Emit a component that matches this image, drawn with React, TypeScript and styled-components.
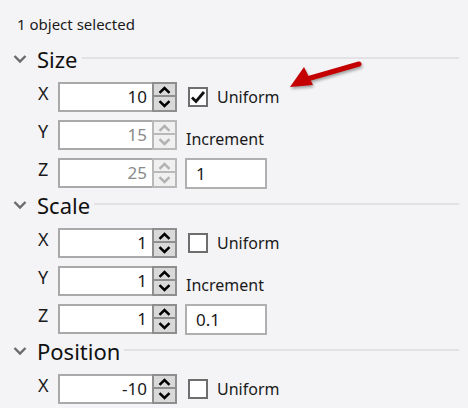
import React from 'react';
import styled, { createGlobalStyle } from 'styled-components';

const GlobalStyle = createGlobalStyle`
  html, body {
    margin: 0;
    padding: 0;
    background: #f4f4f6;
    font-family: "Noto Sans", "Open Sans", sans-serif;
    color: #1a1a1a;
  }
  * { box-sizing: border-box; }
`;

const Panel = styled.div`
  position: relative;
  width: 468px;
  padding-top: 14px;
`;

const Status = styled.div`
  padding-left: 17px;
  font-size: 15px;
  line-height: 20px;
  height: 30px;
`;

const Section = styled.section`
  padding-bottom: 2px;
`;

const Header = styled.div`
  display: flex;
  align-items: center;
  height: 30px;
  padding-left: 13px;
`;

const Title = styled.span`
  margin-left: 10px;
  font-size: 22px;
  line-height: 30px;
  color: #111;
`;

const Rule = styled.div`
  flex: 1;
  height: 2px;
  margin: 0 9px 2px 4px;
  background: #e2e2e6;
`;

const Rows = styled.div`
  display: grid;
  grid-template-columns: 12px 119px auto;
  grid-auto-rows: 30px;
  column-gap: 8px;
  row-gap: 8px;
  padding: 8px 0 0 38px;
`;

const Axis = styled.span`
  font-size: 18px;
  line-height: 22px;
  align-self: start;
`;

const Field = styled.div`
  display: flex;
  height: 30px;
`;

const ValueBox = styled.div<{ $disabled?: boolean }>`
  flex: 1;
  background: #fff;
  border: 2px solid #a9a9a9;
  border-right: none;
  padding-right: 5px;
  text-align: right;
  font-size: 17px;
  line-height: 26px;
  color: ${p => (p.$disabled ? '#8a8a8a' : '#1a1a1a')};
`;

const Spinner = styled.div<{ $disabled?: boolean }>`
  width: 25px;
  display: grid;
  grid-template-rows: 1fr 1fr;
  border: 2px solid ${p => (p.$disabled ? '#b9b9b9' : '#8e8e8e')};
  background: ${p => (p.$disabled ? '#f0f0f0' : '#d9d9d9')};
  color: ${p => (p.$disabled ? '#b2b2b2' : '#000')};
`;

const SpinButton = styled.div<{ $top?: boolean; $disabled?: boolean }>`
  display: flex;
  align-items: center;
  justify-content: center;
  border-bottom: ${p => (p.$top ? `2px solid ${p.$disabled ? '#b9b9b9' : '#8e8e8e'}` : 'none')};
`;

const Side = styled.div<{ $end?: boolean }>`
  display: flex;
  align-items: ${p => (p.$end ? 'flex-end' : 'center')};
`;

const CheckBox = styled.span`
  width: 20px;
  height: 20px;
  margin-left: 3px;
  border: 2px solid #6e6e6e;
  background: #fff;
  display: flex;
  align-items: center;
  justify-content: center;
`;

const CheckLabel = styled.span`
  margin-left: 9px;
  font-size: 16px;
`;

const IncLabel = styled.span`
  margin-left: 1px;
  font-size: 16px;
  line-height: 20px;
  margin-bottom: 1px;
`;

const IncBox = styled.div`
  width: 82px;
  height: 31px;
  background: #fff;
  border: 2px solid #b0b0b0;
  padding-left: 9px;
  font-size: 17px;
  line-height: 27px;
`;

const Pointer = styled.svg`
  position: absolute;
  left: 285px;
  top: 56px;
  filter: drop-shadow(1px 2px 1.5px rgba(0, 0, 0, 0.35));
`;

const Chevron = ({ up }: { up?: boolean }) => (
  <svg width="13" height="8" viewBox="0 0 13 8">
    <path
      d={up ? 'M1.5 6.8 L6.5 2 L11.5 6.8' : 'M1.5 1.2 L6.5 6 L11.5 1.2'}
      fill="none"
      stroke="currentColor"
      strokeWidth="2.5"
    />
  </svg>
);

const Caret = () => (
  <svg width="14" height="10" viewBox="0 0 14 10">
    <path d="M1.5 2 L7 7.5 L12.5 2" fill="none" stroke="#6a6a6a" strokeWidth="2.4" />
  </svg>
);

type Row = {
  axis: string;
  value: string;
  disabled?: boolean;
  side?: 'check' | 'checked' | 'label' | 'box';
  inc?: string;
};

function NumberField({ value, disabled }: { value: string; disabled?: boolean }) {
  return (
    <Field>
      <ValueBox $disabled={disabled}>{value}</ValueBox>
      <Spinner $disabled={disabled}>
        <SpinButton $top $disabled={disabled}>
          <Chevron up />
        </SpinButton>
        <SpinButton>
          <Chevron />
        </SpinButton>
      </Spinner>
    </Field>
  );
}

function SideCell({ row }: { row: Row }) {
  if (row.side === 'check' || row.side === 'checked') {
    return (
      <Side>
        <CheckBox>
          {row.side === 'checked' && (
            <svg width="16" height="14" viewBox="0 0 16 14">
              <path d="M2 7.5 L6 11.5 L14 2" fill="none" stroke="#111" strokeWidth="2.8" />
            </svg>
          )}
        </CheckBox>
        <CheckLabel>Uniform</CheckLabel>
      </Side>
    );
  }
  if (row.side === 'label') {
    return (
      <Side $end>
        <IncLabel>Increment</IncLabel>
      </Side>
    );
  }
  if (row.side === 'box') {
    return (
      <Side>
        <IncBox>{row.inc}</IncBox>
      </Side>
    );
  }
  return <Side />;
}

function Group({ title, rows }: { title: string; rows: Row[] }) {
  return (
    <Section>
      <Header>
        <Caret />
        <Title>{title}</Title>
        <Rule />
      </Header>
      <Rows>
        {rows.map(r => (
          <React.Fragment key={r.axis}>
            <Axis>{r.axis}</Axis>
            <NumberField value={r.value} disabled={r.disabled} />
            <SideCell row={r} />
          </React.Fragment>
        ))}
      </Rows>
    </Section>
  );
}

export default function App() {
  return (
    <>
      <GlobalStyle />
      <Panel>
        <Status>1 object selected</Status>
        <Group
          title="Size"
          rows={[
            { axis: 'X', value: '10', side: 'checked' },
            { axis: 'Y', value: '15', disabled: true, side: 'label' },
            { axis: 'Z', value: '25', disabled: true, side: 'box', inc: '1' },
          ]}
        />
        <Group
          title="Scale"
          rows={[
            { axis: 'X', value: '1', side: 'check' },
            { axis: 'Y', value: '1', side: 'label' },
            { axis: 'Z', value: '1', side: 'box', inc: '0.1' },
          ]}
        />
        <Group title="Position" rows={[{ axis: 'X', value: '-10', side: 'check' }]} />
        <Pointer width="82" height="38" viewBox="0 0 82 38">
          <path d="M74 8 L22 23" stroke="#c40000" strokeWidth="5" strokeLinecap="round" />
          <path d="M5 31 L19 11 L28 29 Z" fill="#c40000" />
        </Pointer>
      </Panel>
    </>
  );
}
